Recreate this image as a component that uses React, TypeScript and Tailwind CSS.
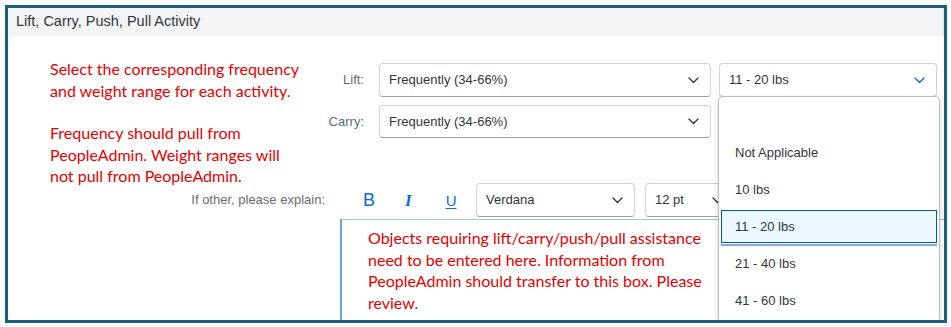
import React from "react";

const ui = "font-['Liberation_Sans',Arial,sans-serif]";
const note = "font-['Lato','Noto_Sans',sans-serif]";

function Chevron({ blue = false }: { blue?: boolean }) {
  return (
    <svg width="11" height="7" viewBox="0 0 11 7" fill="none">
      <path
        d="M1 1l4.5 4.5L10 1"
        stroke={blue ? "#0a6ed1" : "#32363a"}
        strokeWidth="1.4"
        strokeLinecap="round"
        strokeLinejoin="round"
      />
    </svg>
  );
}

function Select({ value, className, blue = false }: { value: string; className: string; blue?: boolean }) {
  return (
    <div
      className={`flex items-center justify-between rounded-[4px] border border-[#cfd3d8] border-b-[#9aa1a8] bg-white pl-[9px] pr-[11px] text-[13px] text-[#32363a] ${className}`}
    >
      <span>{value}</span>
      <Chevron blue={blue} />
    </div>
  );
}

const weights = ["", "Not Applicable", "10 lbs", "11 - 20 lbs", "21 - 40 lbs", "41 - 60 lbs"];

function WeightMenu() {
  return (
    <div className="absolute left-[-1px] top-[33px] z-10 h-[240px] w-[222px] rounded-t-[5px] border border-[#b8bdc3] bg-white shadow-[0_2px_6px_rgba(0,0,0,0.15)]">
      {weights.map((w) =>
        w === "11 - 20 lbs" ? (
          <div key={w} className="h-[37px] px-[2px] pt-[2px]">
            <div className="flex h-[33px] items-center border border-[#0854a0] bg-[#ebf8ff] pl-[13px]">{w}</div>
            <div className="mt-[1px] h-[2px] bg-[#7fb0e0]" />
          </div>
        ) : (
          <div key={w || "blank"} className="flex h-[37px] items-center pl-[16px]">
            {w}
          </div>
        )
      )}
    </div>
  );
}

export default function App() {
  return (
    <div className={`h-[327px] w-[951px] bg-white pl-[5px] pt-[5px] ${ui}`}>
      <div className="relative h-[318px] w-[942px] overflow-hidden border-[3px] border-[#1b5f7f] bg-white">
        <div className="flex h-[28px] items-center border-r border-[#dfe2e5] bg-[#f2f4f5] pl-[8px] text-[14.5px] text-[#32363a]">
          Lift, Carry, Push, Pull Activity
        </div>

        <div className="flex h-[145px]">
          <div className={`ml-[42px] w-[265px] pt-[22px] text-[16px] leading-[21.5px] text-[#e80000] ${note}`}>
            <p>
              Select the corresponding frequency
              <br />
              and weight range for each activity.
            </p>
            <p className="mt-[21px]">
              Frequency should pull from
              <br />
              PeopleAdmin. Weight ranges will
              <br />
              not pull from PeopleAdmin.
            </p>
          </div>

          <div className="flex flex-col gap-[8px] pt-[27px] text-[13px]">
            <div className="flex items-center">
              <span className="w-[49px] text-right text-[#556b82]">Lift:</span>
              <Select value="Frequently (34-66%)" className="ml-[15px] h-[34px] w-[332px]" />
              <div className="relative ml-[8px] w-[218px] text-[13px] text-[#32363a]">
                <Select value="11 - 20 lbs" className="h-[34px] w-[218px]" blue />
                <WeightMenu />
              </div>
            </div>
            <div className="flex items-center">
              <span className="w-[49px] text-right text-[#556b82]">Carry:</span>
              <Select value="Frequently (34-66%)" className="ml-[15px] h-[33px] w-[332px]" />
            </div>
          </div>
        </div>

        <div className="flex h-[38px] items-center text-[13px]">
          <span className="w-[317px] text-right text-[#6a6d70]">If other, please explain:</span>
          <div className="ml-[38px] flex w-[100px] items-center text-[#0a6ed1]">
            <span className="text-[18px] leading-none">B</span>
            <span className="ml-[30px] font-['Liberation_Serif',serif] text-[17px] font-bold italic leading-none">I</span>
            <span className="ml-[34px] text-[15px] leading-none underline underline-offset-2">U</span>
          </div>
          <Select value="Verdana" className="ml-[13px] h-[34px] w-[159px]" />
          <Select value="12 pt" className="ml-[10px] h-[34px] w-[90px]" />
        </div>

        <div className={`ml-[332px] h-[120px] border-l-2 border-t border-l-[#6aa2dc] border-t-[#9cc0e6] pl-[26px] pt-[7px] text-[16px] leading-[21.5px] text-[#e80000] ${note}`}>
          Objects requiring lift/carry/push/pull assistance
          <br />
          need to be entered here. Information from
          <br />
          PeopleAdmin should transfer to this box. Please
          <br />
          review.
        </div>
      </div>
    </div>
  );
}
